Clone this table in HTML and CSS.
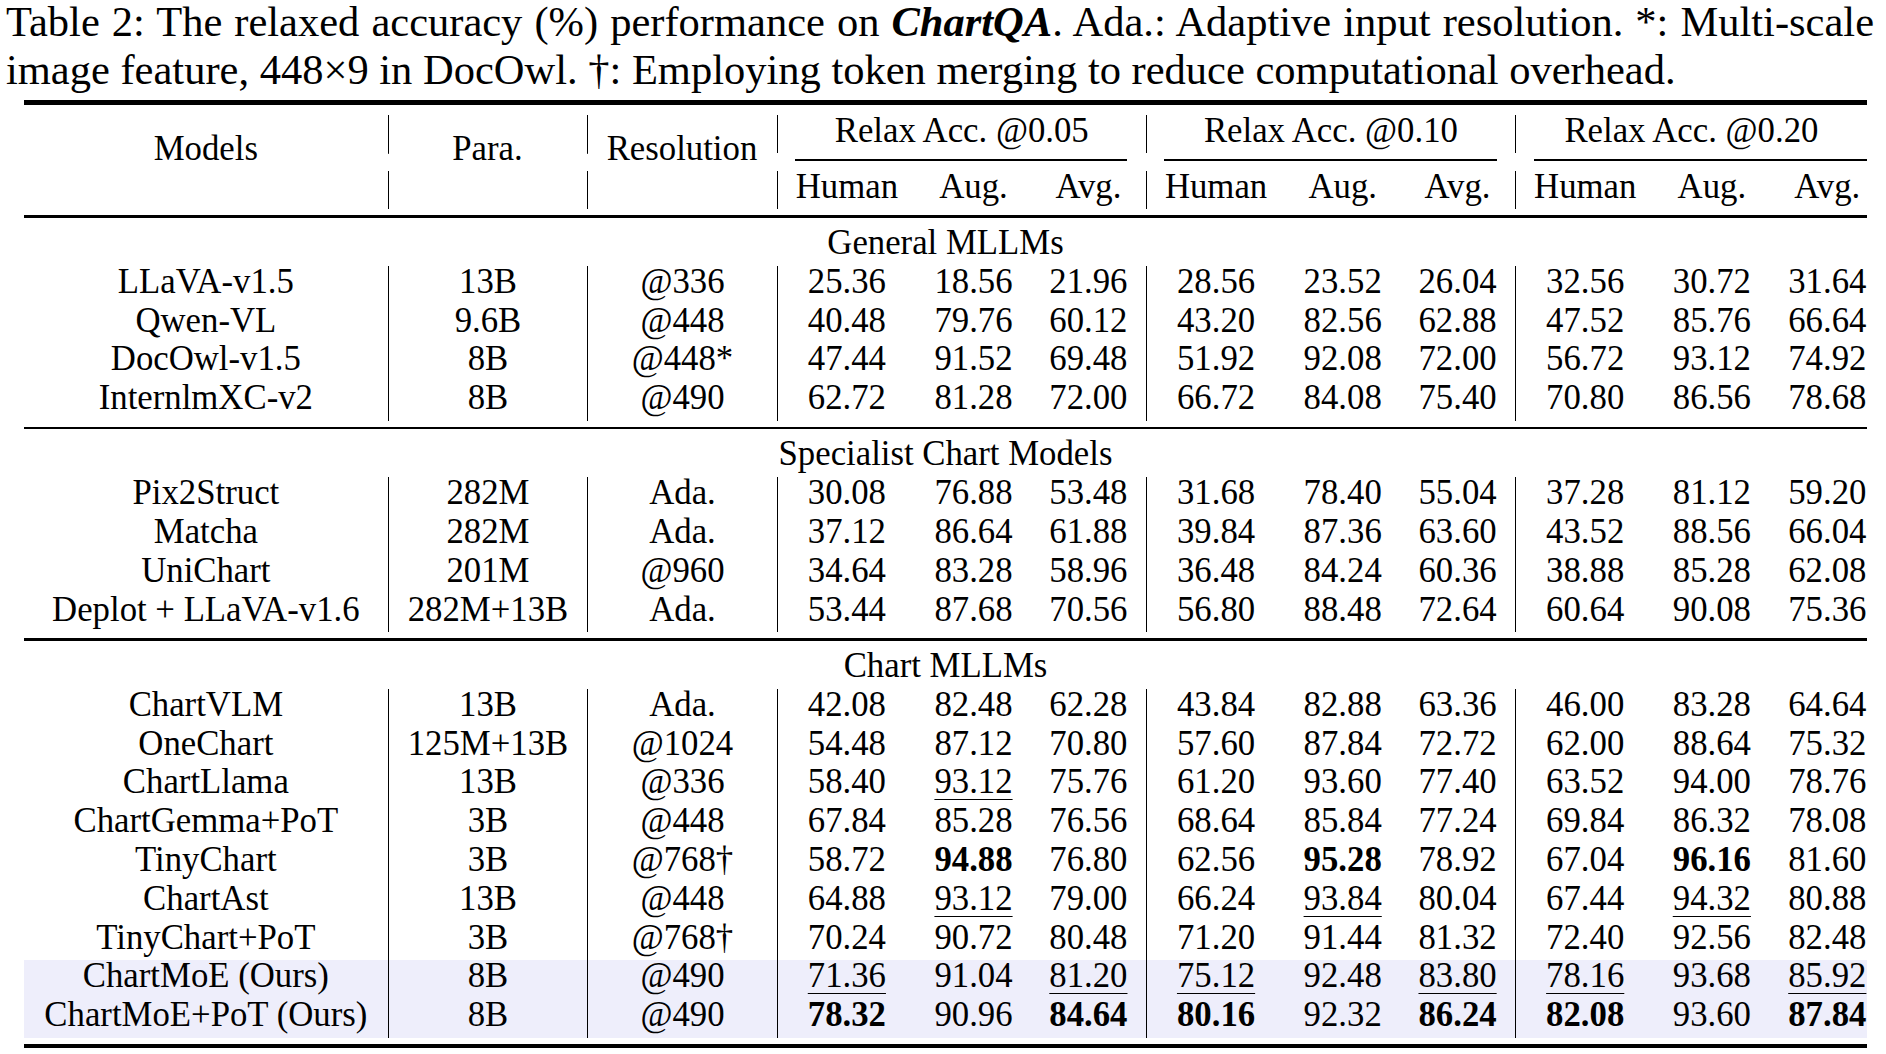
FILE: index.html
```html
<!DOCTYPE html>
<html>
<head>
<meta charset="utf-8">
<link rel="stylesheet" href="styles.css">
</head>
<body>
<div class="page">
  <div class="caption">
    <p class="cap-line first">Table 2: The relaxed accuracy (%) performance on <b><i>ChartQA</i></b>. Ada.: Adaptive input resolution. *: Multi-scale</p>
    <p class="cap-line">image feature, 448×9 in DocOwl. †: Employing token merging to reduce computational overhead.</p>
  </div>

  <div class="tbl">
    <div class="rule heavy top"></div>

    <div class="head">
      <div class="mr c1">Models</div>
      <div class="mr c2 vl2">Para.</div>
      <div class="mr c3 vl2">Resolution</div>
      <div class="grp g1 vl">Relax Acc. @0.05</div>
      <div class="grp g2 vl">Relax Acc. @0.10</div>
      <div class="grp g3 vl">Relax Acc. @0.20</div>
      <div class="cmid g1"></div>
      <div class="cmid g2"></div>
      <div class="cmid g3 end"></div>
      <div class="sub vl">Human</div><div class="sub">Aug.</div><div class="sub">Avg.</div>
      <div class="sub vl">Human</div><div class="sub">Aug.</div><div class="sub">Avg.</div>
      <div class="sub vl">Human</div><div class="sub">Aug.</div><div class="sub last">Avg.</div>
    </div>

    <div class="rule mid"></div>
    <div class="section">General MLLMs</div>
    <div class="row"><span>LLaVA-v1.5</span><span class="vl">13B</span><span class="vl">@336</span><span class="vl">25.36</span><span>18.56</span><span>21.96</span><span class="vl">28.56</span><span>23.52</span><span>26.04</span><span class="vl">32.56</span><span>30.72</span><span class="last">31.64</span></div>
    <div class="row"><span>Qwen-VL</span><span class="vl">9.6B</span><span class="vl">@448</span><span class="vl">40.48</span><span>79.76</span><span>60.12</span><span class="vl">43.20</span><span>82.56</span><span>62.88</span><span class="vl">47.52</span><span>85.76</span><span class="last">66.64</span></div>
    <div class="row"><span>DocOwl-v1.5</span><span class="vl">8B</span><span class="vl">@448*</span><span class="vl">47.44</span><span>91.52</span><span>69.48</span><span class="vl">51.92</span><span>92.08</span><span>72.00</span><span class="vl">56.72</span><span>93.12</span><span class="last">74.92</span></div>
    <div class="row"><span>InternlmXC-v2</span><span class="vl">8B</span><span class="vl">@490</span><span class="vl">62.72</span><span>81.28</span><span>72.00</span><span class="vl">66.72</span><span>84.08</span><span>75.40</span><span class="vl">70.80</span><span>86.56</span><span class="last">78.68</span></div>

    <div class="rule mid"></div>
    <div class="section">Specialist Chart Models</div>
    <div class="row"><span>Pix2Struct</span><span class="vl">282M</span><span class="vl">Ada.</span><span class="vl">30.08</span><span>76.88</span><span>53.48</span><span class="vl">31.68</span><span>78.40</span><span>55.04</span><span class="vl">37.28</span><span>81.12</span><span class="last">59.20</span></div>
    <div class="row"><span>Matcha</span><span class="vl">282M</span><span class="vl">Ada.</span><span class="vl">37.12</span><span>86.64</span><span>61.88</span><span class="vl">39.84</span><span>87.36</span><span>63.60</span><span class="vl">43.52</span><span>88.56</span><span class="last">66.04</span></div>
    <div class="row"><span>UniChart</span><span class="vl">201M</span><span class="vl">@960</span><span class="vl">34.64</span><span>83.28</span><span>58.96</span><span class="vl">36.48</span><span>84.24</span><span>60.36</span><span class="vl">38.88</span><span>85.28</span><span class="last">62.08</span></div>
    <div class="row"><span>Deplot + LLaVA-v1.6</span><span class="vl">282M+13B</span><span class="vl">Ada.</span><span class="vl">53.44</span><span>87.68</span><span>70.56</span><span class="vl">56.80</span><span>88.48</span><span>72.64</span><span class="vl">60.64</span><span>90.08</span><span class="last">75.36</span></div>

    <div class="rule mid"></div>
    <div class="section">Chart MLLMs</div>
    <div class="row"><span>ChartVLM</span><span class="vl">13B</span><span class="vl">Ada.</span><span class="vl">42.08</span><span>82.48</span><span>62.28</span><span class="vl">43.84</span><span>82.88</span><span>63.36</span><span class="vl">46.00</span><span>83.28</span><span class="last">64.64</span></div>
    <div class="row"><span>OneChart</span><span class="vl">125M+13B</span><span class="vl">@1024</span><span class="vl">54.48</span><span>87.12</span><span>70.80</span><span class="vl">57.60</span><span>87.84</span><span>72.72</span><span class="vl">62.00</span><span>88.64</span><span class="last">75.32</span></div>
    <div class="row"><span>ChartLlama</span><span class="vl">13B</span><span class="vl">@336</span><span class="vl">58.40</span><span><u>93.12</u></span><span>75.76</span><span class="vl">61.20</span><span>93.60</span><span>77.40</span><span class="vl">63.52</span><span>94.00</span><span class="last">78.76</span></div>
    <div class="row"><span>ChartGemma+PoT</span><span class="vl">3B</span><span class="vl">@448</span><span class="vl">67.84</span><span>85.28</span><span>76.56</span><span class="vl">68.64</span><span>85.84</span><span>77.24</span><span class="vl">69.84</span><span>86.32</span><span class="last">78.08</span></div>
    <div class="row"><span>TinyChart</span><span class="vl">3B</span><span class="vl">@768†</span><span class="vl">58.72</span><span><b>94.88</b></span><span>76.80</span><span class="vl">62.56</span><span><b>95.28</b></span><span>78.92</span><span class="vl">67.04</span><span><b>96.16</b></span><span class="last">81.60</span></div>
    <div class="row"><span>ChartAst</span><span class="vl">13B</span><span class="vl">@448</span><span class="vl">64.88</span><span><u>93.12</u></span><span>79.00</span><span class="vl">66.24</span><span><u>93.84</u></span><span>80.04</span><span class="vl">67.44</span><span><u>94.32</u></span><span class="last">80.88</span></div>
    <div class="row"><span>TinyChart+PoT</span><span class="vl">3B</span><span class="vl">@768†</span><span class="vl">70.24</span><span>90.72</span><span>80.48</span><span class="vl">71.20</span><span>91.44</span><span>81.32</span><span class="vl">72.40</span><span>92.56</span><span class="last">82.48</span></div>
    <div class="row ours"><span>ChartMoE (Ours)</span><span class="vl">8B</span><span class="vl">@490</span><span class="vl"><u>71.36</u></span><span>91.04</span><span><u>81.20</u></span><span class="vl"><u>75.12</u></span><span>92.48</span><span><u>83.80</u></span><span class="vl"><u>78.16</u></span><span>93.68</span><span class="last"><u>85.92</u></span></div>
    <div class="row ours"><span>ChartMoE+PoT (Ours)</span><span class="vl">8B</span><span class="vl">@490</span><span class="vl"><b>78.32</b></span><span>90.96</span><span><b>84.64</b></span><span class="vl"><b>80.16</b></span><span>92.32</span><span><b>86.24</b></span><span class="vl"><b>82.08</b></span><span>93.60</span><span class="last"><b>87.84</b></span></div>

    <div class="rule heavy bottom"></div>
  </div>
</div>
</body>
</html>
```

FILE: styles.css
```css
html, body {
  margin: 0;
  padding: 0;
  background: #ffffff;
}

.page {
  width: 1886px;
  color: #000;
  font-family: "Liberation Serif", "Times New Roman", serif;
}

.caption {
  margin: -2px 0 0 6px;
  width: 1868px;
  font-size: 42.5px;
  line-height: 48px;
}

.cap-line {
  margin: 0;
  white-space: nowrap;
}

.cap-line.first {
  text-align: justify;
  text-align-last: justify;
}

.caption b i {
  font-weight: bold;
  font-style: italic;
}

.tbl {
  margin: 6.3px 0 0 24px;
  width: 1843px;
  font-size: 34.75px;
}

.rule {
  background: #000;
}

.rule.heavy {
  height: 4.4px;
}

.rule.top {
  margin-bottom: 10px;
}

.rule.bottom {
  margin-top: 6px;
}

.rule.mid {
  height: 2.5px;
  margin: 6px 0 9px;
}

.head,
.row {
  display: grid;
  grid-template-columns: 363.7px 199.6px 189.4px 139.4px 114.9px 114.9px 139.4px 114.9px 114.9px 139.4px 114.9px 97.5px;
}

.head {
  grid-template-rows: 38.8px 17.2px 38.8px;
}

.head > div,
.row > span,
.section {
  text-align: center;
  white-space: nowrap;
  line-height: 32.8px;
  padding-bottom: 6px;
  box-sizing: border-box;
}

.head .mr {
  grid-row: 1 / 4;
  display: flex;
  align-items: center;
  justify-content: center;
  padding-bottom: 24.4px;
}

.head .c1 { grid-column: 1; }
.head .c2 { grid-column: 2; }
.head .c3 { grid-column: 3; }

.head .vl2 {
  background:
    linear-gradient(#000, #000) left top / 1px 38.8px no-repeat,
    linear-gradient(#000, #000) left bottom / 1px 38.8px no-repeat;
}

.head .grp { grid-row: 1; }
.head .g1 { grid-column: 4 / 7; }
.head .g2 { grid-column: 7 / 10; }
.head .g3 { grid-column: 10 / 13; }

.head .cmid {
  grid-row: 2;
  padding: 0;
  margin: 6px 18.5px 0;
  height: 1.5px;
  background: #000;
}

.head .cmid.end {
  margin-right: 0;
}

.head .sub {
  grid-row: 3;
}

.vl {
  border-left: 1px solid #000;
}

.last {
  padding-left: 18.5px;
}

.section {
  height: 38.8px;
}

.row {
  height: 38.8px;
}

.row.ours {
  background: #eeeefb;
}

u {
  text-decoration: underline;
  text-underline-offset: 6px;
  text-decoration-thickness: 1.3px;
}

b {
  font-weight: bold;
}
```
